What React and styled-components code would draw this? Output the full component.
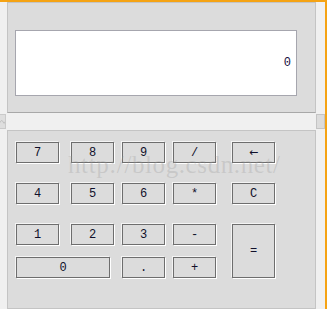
import React from "react";
import styled, { createGlobalStyle } from "styled-components";

const Global = createGlobalStyle`
  html, body { margin: 0; padding: 0; background: #ffffff; }
  #root { width: 328px; height: 309px; }
`;

const Frame = styled.div`
  box-sizing: border-box;
  width: 327px;
  height: 309px;
  background: #f0f0f0;
  border-top: 2px solid #f5a314;
  border-right: 2px solid #f5a314;
  display: flex;
  flex-direction: column;
  overflow: hidden;
`;

const Panel = styled.div`
  box-sizing: border-box;
  margin-left: 7px;
  width: 309px;
  background: #dcdcdc;
  border: 1px solid #c4c4c4;
  position: relative;
`;

const TopPanel = styled(Panel)`
  height: 111px;
  border-bottom-color: #a8a8a8;
  padding: 27px 0 0 7px;
`;

const Display = styled.div`
  box-sizing: border-box;
  width: 282px;
  height: 66px;
  background: #ffffff;
  border: 1px solid #a6a6ae;
  display: flex;
  align-items: center;
  justify-content: flex-end;
  padding: 0 5px 0 0;
  font-family: "Liberation Mono", monospace;
  font-size: 12px;
  color: #1a1040;
`;

const ScrollRow = styled.div`
  display: flex;
  height: 17px;
  align-items: stretch;
`;

const Stub = styled.div`
  box-sizing: border-box;
  width: 6px;
  margin: 1px 0 1px 0;
  background: #dedede;
  border: 1px solid #cacaca;
  border-left: none;
  display: flex;
  align-items: center;
  overflow: hidden;
`;

const Track = styled.div`
  flex: 0 0 310px;
  background: #f0f0f0;
`;

const Thumb = styled.div`
  box-sizing: border-box;
  width: 10px;
  margin: 1px 0 1px 0;
  background: #dcdcdc;
  border: 1px solid #c4c4c4;
`;

const BottomPanel = styled(Panel)`
  height: 179px;
  padding: 11px 0 0 8px;
`;

const Keys = styled.div`
  display: grid;
  grid-template-columns: 55px 51px 51px 59px 43px;
  grid-template-rows: 41px 41px 33px 21px;
  align-items: start;
  justify-items: start;
`;

const Key = styled.button`
  box-sizing: border-box;
  width: ${(p) => p.$w || 43}px;
  height: ${(p) => p.$h || 21}px;
  margin: 0;
  padding: 0;
  background: #dcdcdc;
  border: 1px solid #6e6e6e;
  box-shadow: 1px 1px 0 #ffffff, -1px -1px 0 #f4f4f4;
  font-family: ${(p) => (p.$sym ? '"DejaVu Sans", sans-serif' : '"Liberation Mono", monospace')};
  font-size: ${(p) => (p.$sym ? 11 : 12)}px;
  color: #10102a;
  display: flex;
  align-items: center;
  justify-content: center;
  grid-column: ${(p) => p.$col || "auto"};
  grid-row: ${(p) => p.$row || "auto"};
`;

const Watermark = styled.div`
  position: absolute;
  left: 60px;
  top: 21px;
  font-family: "Liberation Serif", serif;
  font-size: 25px;
  line-height: 25px;
  letter-spacing: 0.6px;
  color: rgba(150, 150, 150, 0.28);
  pointer-events: none;
  white-space: nowrap;
`;

export default function App() {
  return (
    <>
      <Global />
      <Frame>
        <TopPanel>
          <Display>0</Display>
        </TopPanel>
        <ScrollRow>
          <Stub>
            <svg width="6" height="15" viewBox="0 0 6 15">
              <path d="M0 9 Q2 4 4 8 T6 8" fill="none" stroke="#b8b8b8" strokeWidth="1" />
            </svg>
          </Stub>
          <Track />
          <Thumb />
        </ScrollRow>
        <BottomPanel>
          <Keys>
            <Key $col="1" $row="1">7</Key>
            <Key $col="2" $row="1">8</Key>
            <Key $col="3" $row="1">9</Key>
            <Key $col="4" $row="1">/</Key>
            <Key $col="5" $row="1" $sym>←</Key>
            <Key $col="1" $row="2">4</Key>
            <Key $col="2" $row="2">5</Key>
            <Key $col="3" $row="2">6</Key>
            <Key $col="4" $row="2">*</Key>
            <Key $col="5" $row="2">C</Key>
            <Key $col="1" $row="3">1</Key>
            <Key $col="2" $row="3">2</Key>
            <Key $col="3" $row="3">3</Key>
            <Key $col="4" $row="3">-</Key>
            <Key $col="5" $row="3 / span 2" $h={54}>=</Key>
            <Key $col="1 / span 2" $row="4" $w={94}>0</Key>
            <Key $col="3" $row="4">.</Key>
            <Key $col="4" $row="4">+</Key>
          </Keys>
          <Watermark>http://blog.csdn.net/</Watermark>
        </BottomPanel>
      </Frame>
    </>
  );
}
